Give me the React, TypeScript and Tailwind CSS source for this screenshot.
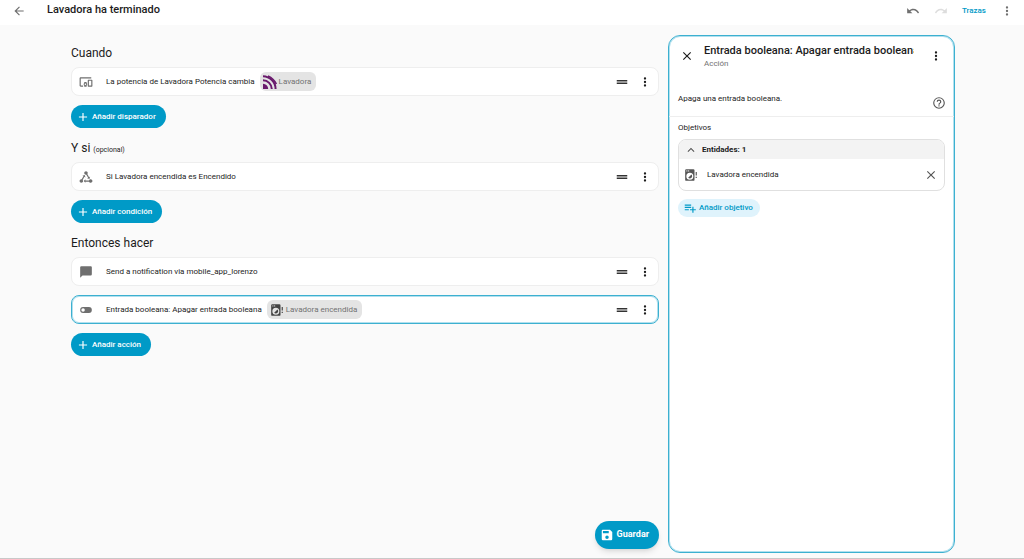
import type { ReactNode } from "react";
import { clsx } from "clsx";

const icons = {
  arrowLeft: "M20,11V13H8L13.5,18.5L12.08,19.92L4.16,12L12.08,4.08L13.5,5.5L8,11H20Z",
  undo: "M12.5,8C9.85,8 7.45,9 5.6,10.6L2,7V16H11L7.38,12.38C8.77,11.22 10.54,10.5 12.5,10.5C16.04,10.5 19.05,12.81 20.1,16L22.47,15.22C21.08,11.03 17.15,8 12.5,8Z",
  redo: "M18.4,10.6C16.55,9 14.15,8 11.5,8C6.85,8 2.92,11.03 1.54,15.22L3.9,16C4.95,12.81 7.95,10.5 11.5,10.5C13.45,10.5 15.23,11.22 16.62,12.38L13,16H22V7L18.4,10.6Z",
  dots: "M12,16A2,2 0 0,1 14,18A2,2 0 0,1 12,20A2,2 0 0,1 10,18A2,2 0 0,1 12,16M12,10A2,2 0 0,1 14,12A2,2 0 0,1 12,14A2,2 0 0,1 10,12A2,2 0 0,1 12,10M12,4A2,2 0 0,1 14,6A2,2 0 0,1 12,8A2,2 0 0,1 10,6A2,2 0 0,1 12,4Z",
  plus: "M19,13H13V19H11V13H5V11H11V5H13V11H19V13Z",
  close: "M19,6.41L17.59,5L12,10.59L6.41,5L5,6.41L10.59,12L5,17.59L6.41,19L12,13.41L17.59,19L19,17.59L13.41,12L19,6.41Z",
  chevronUp: "M7.41,15.41L12,10.83L16.59,15.41L18,14L12,8L6,14L7.41,15.41Z",
  drag: "M21 11H3V8.500H21V11M21 13H3V15.500H21V13Z",
  devices: "M3 6H21V4H3C1.9 4 1 4.9 1 6V18C1 19.1 1.9 20 3 20H7V18H3V6M13 12H9V13.78C8.39 14.33 8 15.11 8 16C8 16.89 8.39 17.67 9 18.22V20H13V18.22C13.61 17.67 14 16.88 14 16S13.61 14.33 13 13.78V12M11 17.5C10.17 17.5 9.5 16.83 9.5 16S10.17 14.5 11 14.5 12.5 15.17 12.5 16 11.83 17.5 11 17.5M22 8H16C15.5 8 15 8.5 15 9V19C15 19.5 15.5 20 16 20H22C22.5 20 23 19.5 23 19V9C23 8.5 22.5 8 22 8M21 18H17V10H21V18Z",
  stateMachine: "M6.27 17.05C6.72 17.58 7 18.25 7 19C7 20.66 5.66 22 4 22S1 20.66 1 19 2.34 16 4 16C4.18 16 4.36 16 4.53 16.05L7.6 10.69L5.86 9.7L9.95 8.58L11.07 12.67L9.33 11.68L6.27 17.05M20 16C18.7 16 17.6 16.84 17.18 18H11V16L8 19L11 22V20H17.18C17.6 21.16 18.7 22 20 22C21.66 22 23 20.66 23 19S21.66 16 20 16M12 8C12.18 8 12.36 8 12.53 7.95L15.6 13.31L13.86 14.3L17.95 15.42L19.07 11.33L17.33 12.32L14.27 6.95C14.72 6.42 15 5.75 15 5C15 3.34 13.66 2 12 2S9 3.34 9 5 10.34 8 12 8Z",
  message: "M20 2H4A2 2 0 0 0 2 4V22L6 18H20A2 2 0 0 0 22 16V4C22 2.89 21.1 2 20 2Z",
  toggle: "M17,7H7A5,5 0 0,0 2,12A5,5 0 0,0 7,17H17A5,5 0 0,0 22,12A5,5 0 0,0 17,7M7,15A3,3 0 0,1 4,12A3,3 0 0,1 7,9A3,3 0 0,1 10,12A3,3 0 0,1 7,15Z",
  washer: "M12.83,11.17C14.39,12.73 14.39,15.27 12.83,16.83C11.27,18.39 8.73,18.39 7.17,16.83L12.83,11.17M4,2H16A2,2 0 0,1 18,4V20A2,2 0 0,1 16,22H4A2,2 0 0,1 2,20V4A2,2 0 0,1 4,2M5,4A1,1 0 0,0 4,5A1,1 0 0,0 5,6A1,1 0 0,0 6,5A1,1 0 0,0 5,4M8,4A1,1 0 0,0 7,5A1,1 0 0,0 8,6A1,1 0 0,0 9,5A1,1 0 0,0 8,4M10,8A6,6 0 0,0 4,14A6,6 0 0,0 10,20A6,6 0 0,0 16,14A6,6 0 0,0 10,8M20,7H22V13H20V7M20,15H22V17H20V15Z",
  help: "M11,18H13V16H11V18M12,2A10,10 0 0,0 2,12A10,10 0 0,0 12,22A10,10 0 0,0 22,12A10,10 0 0,0 12,2M12,20C7.59,20 4,16.41 4,12C4,7.59 7.59,4 12,4C16.41,4 20,7.59 20,12C20,16.41 16.41,20 12,20M12,6A4,4 0 0,0 8,10H10A2,2 0 0,1 12,8A2,2 0 0,1 14,10C14,12 11,11.75 11,15H13C13,12.75 16,12.5 16,10A4,4 0 0,0 12,6Z",
  playlistPlus: "M3 16H10V14H3M18 14V10H16V14H12V16H16V20H18V16H22V14M14 6H3V8H14M14 10H3V12H14V10Z",
  save: "M15,9H5V5H15M12,19A3,3 0 0,1 9,16A3,3 0 0,1 12,13A3,3 0 0,1 15,16A3,3 0 0,1 12,19M17,3H5C3.89,3 3,3.9 3,5V19A2,2 0 0,0 5,21H19A2,2 0 0,0 21,19V7L17,3Z",
};

type IconName = keyof typeof icons;

function Icon({ name, className }: { name: IconName; className?: string }) {
  return (
    <svg viewBox="0 0 24 24" fill="currentColor" aria-hidden="true" className={clsx("shrink-0", className ?? "size-3.5")}>
      <path d={icons[name]} />
    </svg>
  );
}

function IconButton({ name, label, className }: { name: IconName; label: string; className?: string }) {
  return (
    <button type="button" aria-label={label} className={clsx("flex shrink-0 items-center justify-center", className)}>
      <Icon name={name} />
    </button>
  );
}

function DeviceLogo() {
  return (
    <svg viewBox="0 0 14 14" aria-hidden="true" className="size-3.5 shrink-0 text-[#6a1b6d]">
      <g fill="none" stroke="currentColor" strokeWidth="2">
        <path d="M0 1.200A13 13 0 0 1 12.600 14" />
        <path d="M0 5.200A9 9 0 0 1 8.800 14" />
        <path d="M5 0.900A16 16 0 0 1 13.300 9" strokeWidth="1.600" />
      </g>
      <path d="M0 8.800A5.200 5.200 0 0 1 5.200 14H0Z" fill="currentColor" />
    </svg>
  );
}

function Chip({ icon, children }: { icon: ReactNode; children: ReactNode }) {
  return (
    <span className="flex h-[19px] items-center gap-0.5 rounded-md bg-[#e4e4e4] pl-[3px] pr-[5px] text-[#727272]">
      {icon}
      {children}
    </span>
  );
}

interface RowProps {
  icon: IconName;
  text: string;
  chip?: ReactNode;
  selected?: boolean;
}

function Row({ icon, text, chip, selected }: RowProps) {
  return (
    <li
      className={clsx(
        "flex h-[29px] items-center rounded-lg border bg-white pl-[7px] pr-1.5 text-[8px]",
        selected ? "border-[#3cb0d0] ring-1 ring-inset ring-[#009ac7]/30" : "border-[#eeeeee]",
      )}
    >
      <Icon name={icon} className="mr-[13px] size-3.5 text-[#6f6f6f]" />
      <span className="mr-[5px] whitespace-nowrap">{text}</span>
      {chip}
      <IconButton name="drag" label="Mover" className="ml-auto mr-[9px] text-[#333333]" />
      <IconButton name="dots" label="Más opciones" />
    </li>
  );
}

function Section({ title, note, add, children }: { title: string; note?: string; add: string; children: ReactNode }) {
  return (
    <section>
      <h2 className="mb-1 h-5 text-[12px] leading-5">
        {title}
        {note && <small className="ml-[3px] text-[7px]">{note}</small>}
      </h2>
      <ul className="flex flex-col gap-[9px]">{children}</ul>
      <button
        type="button"
        className="mt-[9px] flex h-[23px] items-center gap-0.5 rounded-full bg-[#009ac7] pl-[5px] pr-2.5 text-[8px] font-medium text-white"
      >
        <Icon name="plus" />
        {add}
      </button>
    </section>
  );
}

function DetailPanel() {
  return (
    <aside className="flex w-[287px] shrink-0 flex-col rounded-xl border border-[#3cb0d0] bg-white text-[8px] ring-1 ring-inset ring-[#009ac7]/30">
      <header className="flex h-10 items-center px-[11px]">
        <IconButton name="close" label="Cerrar" />
        <div className="ml-2.5 mr-[15px] min-w-0 flex-1">
          <h2 className="overflow-hidden whitespace-nowrap text-[11px] leading-[14px] font-medium">
            Entrada booleana: Apagar entrada booleana
          </h2>
          <p className="leading-[11px] text-[#727272]">Acción</p>
        </div>
        <IconButton name="dots" label="Más opciones" />
      </header>
      <div className="mt-2.5 flex h-[31px] items-start justify-between border-b border-[#eeeeee] pl-[9px] pr-2">
        <p className="mt-[7px]">Apaga una entrada booleana.</p>
        <IconButton name="help" label="Ayuda" className="mt-2.5 text-[#555555]" />
      </div>
      <div className="px-[9px] pt-[5px]">
        <h3 className="leading-3">Objetivos</h3>
        <div className="mt-[5px] overflow-hidden rounded-lg border border-[#e0e0e0]">
          <button type="button" className="flex h-[19px] w-full items-center bg-[#f3f3f3] pl-[5px] font-bold">
            <Icon name="chevronUp" className="mr-1 size-3.5 text-[#555555]" />
            Entidades: 1
          </button>
          <div className="flex h-[31px] items-center pl-[5px] pr-1.5">
            <Icon name="washer" className="mr-[9px] size-3.5 text-[#555555]" />
            Lavadora encendida
            <IconButton name="close" label="Quitar" className="ml-auto text-[#555555]" />
          </div>
        </div>
        <button
          type="button"
          className="mt-2 flex h-[18px] items-center gap-0.5 rounded-full bg-[#dff3fc] pl-[5px] pr-[7px] font-medium text-[#009ac7]"
        >
          <Icon name="playlistPlus" />
          Añadir objetivo
        </button>
      </div>
    </aside>
  );
}

export default function App() {
  return (
    <div className="flex min-h-screen flex-col border-b border-[#c8c8c8] bg-[#fafafa] font-[Roboto,sans-serif] text-[#1c1c1c]">
      <header className="flex h-[25px] items-center bg-white pb-1 pl-3 pr-2.5">
        <IconButton name="arrowLeft" label="Atrás" className="text-[#6f6f6f]" />
        <h1 className="ml-[21px] text-[11px] font-medium">Lavadora ha terminado</h1>
        <div className="ml-auto flex items-center">
          <IconButton name="undo" label="Deshacer" className="mr-3.5 text-[#6f6f6f]" />
          <IconButton name="redo" label="Rehacer" className="mr-3.5 text-[#dddddd]" />
          <a href="#trazas" className="mr-3.5 text-[8px] font-medium text-[#009ac7]">
            Trazas
          </a>
          <IconButton name="dots" label="Menú" className="text-[#6f6f6f]" />
        </div>
      </header>
      <div className="flex flex-1 gap-[9px] pt-2.5 pr-[69px] pb-[5px] pl-[71px]">
        <main className="flex min-w-0 flex-1 flex-col gap-2.5 pt-2">
          <Section title="Cuando" add="Añadir disparador">
            <Row icon="devices" text="La potencia de Lavadora Potencia cambia" chip={<Chip icon={<DeviceLogo />}>Lavadora</Chip>} />
          </Section>
          <Section title="Y si" note="(opcional)" add="Añadir condición">
            <Row icon="stateMachine" text="Si Lavadora encendida es Encendido" />
          </Section>
          <Section title="Entonces hacer" add="Añadir acción">
            <Row icon="message" text="Send a notification via mobile_app_lorenzo" />
            <Row
              icon="toggle"
              text="Entrada booleana: Apagar entrada booleana"
              chip={<Chip icon={<Icon name="washer" className="size-3.5 text-[#444444]" />}>Lavadora encendida</Chip>}
              selected
            />
          </Section>
          <button
            type="button"
            className="mt-auto mb-1 flex h-7 items-center gap-[3px] self-end rounded-full bg-[#009ac7] pl-[5px] pr-2.5 text-[9px] font-bold text-white shadow-md"
          >
            <Icon name="save" />
            Guardar
          </button>
        </main>
        <DetailPanel />
      </div>
    </div>
  );
}
